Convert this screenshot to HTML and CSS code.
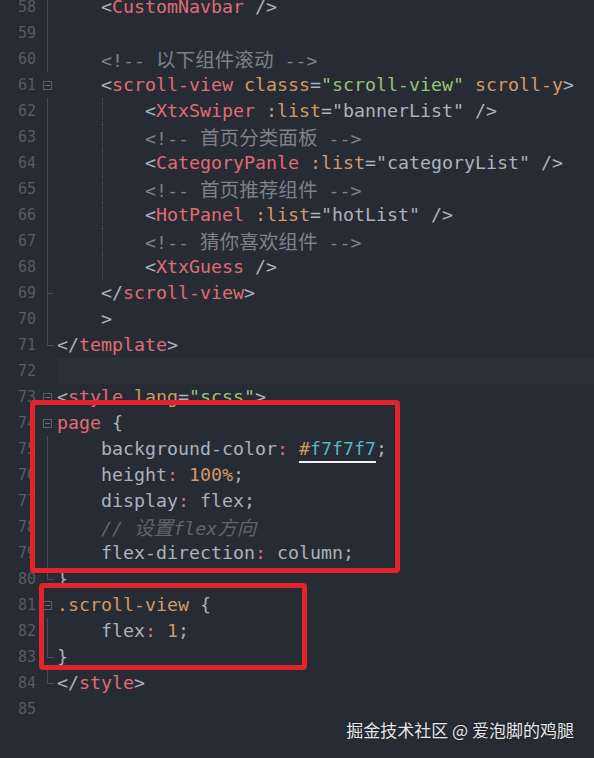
FILE: index.html
```html
<!DOCTYPE html>
<html lang="zh">
<head>
<meta charset="utf-8">
<title>code</title>
<link rel="stylesheet" href="styles.css">
</head>
<body>
<div class="editor">
  <div class="lines">
    <div class="row"><span class="ln">58</span><span class="fold f-line"></span><span class="code">    <span class="p">&lt;</span><span class="t">CustomNavbar</span> <span class="p">/&gt;</span></span></div>
    <div class="row"><span class="ln">59</span><span class="fold f-line"></span><span class="code"></span></div>
    <div class="row"><span class="ln">60</span><span class="fold f-line"></span><span class="code">    <span class="c">&lt;!-- <span class="cjk">以下组件滚动</span> --&gt;</span></span></div>
    <div class="row"><span class="ln">61</span><span class="fold f-box"></span><span class="code">    <span class="p">&lt;</span><span class="t">scroll-view</span> <span class="a">classs</span><span class="p">=</span><span class="s">"scroll-view"</span> <span class="a">scroll-y</span><span class="p">&gt;</span></span></div>
    <div class="row"><span class="ln">62</span><span class="fold f-line"></span><span class="code g">        <span class="p">&lt;</span><span class="t">XtxSwiper</span> <span class="a">:list</span><span class="p">="bannerList"</span> <span class="p">/&gt;</span></span></div>
    <div class="row"><span class="ln">63</span><span class="fold f-line"></span><span class="code g">        <span class="c">&lt;!-- <span class="cjk">首页分类面板</span> --&gt;</span></span></div>
    <div class="row"><span class="ln">64</span><span class="fold f-line"></span><span class="code g">        <span class="p">&lt;</span><span class="t">CategoryPanle</span> <span class="a">:list</span><span class="p">="categoryList"</span> <span class="p">/&gt;</span></span></div>
    <div class="row"><span class="ln">65</span><span class="fold f-line"></span><span class="code g">        <span class="c">&lt;!-- <span class="cjk">首页推荐组件</span> --&gt;</span></span></div>
    <div class="row"><span class="ln">66</span><span class="fold f-line"></span><span class="code g">        <span class="p">&lt;</span><span class="t">HotPanel</span> <span class="a">:list</span><span class="p">="hotList"</span> <span class="p">/&gt;</span></span></div>
    <div class="row"><span class="ln">67</span><span class="fold f-line"></span><span class="code g">        <span class="c">&lt;!-- <span class="cjk">猜你喜欢组件</span> --&gt;</span></span></div>
    <div class="row"><span class="ln">68</span><span class="fold f-line"></span><span class="code g">        <span class="p">&lt;</span><span class="t">XtxGuess</span> <span class="p">/&gt;</span></span></div>
    <div class="row"><span class="ln">69</span><span class="fold f-tick"></span><span class="code">    <span class="p">&lt;/</span><span class="t">scroll-view</span><span class="p">&gt;</span></span></div>
    <div class="row"><span class="ln">70</span><span class="fold f-line"></span><span class="code">    <span class="p">&gt;</span></span></div>
    <div class="row"><span class="ln">71</span><span class="fold f-end"></span><span class="code"><span class="p">&lt;/</span><span class="t">template</span><span class="p">&gt;</span></span></div>
    <div class="row"><span class="ln">72</span><span class="fold"></span><span class="code cur"></span></div>
    <div class="row"><span class="ln">73</span><span class="fold f-box"></span><span class="code"><span class="p">&lt;</span><span class="t">style</span> <span class="a">lang</span><span class="p">=</span><span class="s">"scss"</span><span class="p">&gt;</span></span></div>
    <div class="row"><span class="ln">74</span><span class="fold f-box"></span><span class="code"><span class="t">page</span> <span class="p">{</span></span></div>
    <div class="row"><span class="ln">75</span><span class="fold f-line"></span><span class="code">    <span class="p">background-color</span><span class="t">:</span> <span class="u"><span class="a">#</span><span class="h">f7f7f7</span></span><span class="p">;</span></span></div>
    <div class="row"><span class="ln">76</span><span class="fold f-line"></span><span class="code">    <span class="p">height</span><span class="t">:</span> <span class="a">100%</span><span class="p">;</span></span></div>
    <div class="row"><span class="ln">77</span><span class="fold f-line"></span><span class="code">    <span class="p">display</span><span class="t">:</span> <span class="p">flex;</span></span></div>
    <div class="row"><span class="ln">78</span><span class="fold f-line"></span><span class="code">    <span class="ci">// <span class="cjk">设置</span>flex<span class="cjk">方向</span></span></span></div>
    <div class="row"><span class="ln">79</span><span class="fold f-line"></span><span class="code">    <span class="p">flex-direction</span><span class="t">:</span> <span class="p">column;</span></span></div>
    <div class="row"><span class="ln">80</span><span class="fold f-end"></span><span class="code"><span class="p">}</span></span></div>
    <div class="row"><span class="ln">81</span><span class="fold f-box"></span><span class="code"><span class="a">.scroll-view</span> <span class="p">{</span></span></div>
    <div class="row"><span class="ln">82</span><span class="fold f-line"></span><span class="code">    <span class="p">flex</span><span class="t">:</span> <span class="a">1</span><span class="p">;</span></span></div>
    <div class="row"><span class="ln">83</span><span class="fold f-end"></span><span class="code"><span class="p">}</span></span></div>
    <div class="row"><span class="ln">84</span><span class="fold f-end"></span><span class="code"><span class="p">&lt;/</span><span class="t">style</span><span class="p">&gt;</span></span></div>
    <div class="row"><span class="ln">85</span><span class="fold"></span><span class="code"></span></div>
  </div>
  <div class="mark box1"></div>
  <div class="mark box2"></div>
  <div class="watermark">掘金技术社区 @ 爱泡脚的鸡腿</div>
</div>
</body>
</html>
```
FILE: styles.css
```css
html, body {
  margin: 0;
  padding: 0;
  background: #272b33;
  height: 100%;
  overflow: hidden;
}
.editor {
  position: relative;
  width: 594px;
  height: 758px;
  overflow: hidden;
  background: #272b33;
}
.lines {
  display: flex;
  flex-direction: column;
  margin-top: -6px;
}
.row {
  display: flex;
  height: 26px;
  line-height: 26px;
  font-family: "DejaVu Sans Mono", "Liberation Mono", monospace;
  font-size: 18.27px;
  color: #abb2bf;
}
.ln {
  width: 36px;
  flex: none;
  text-align: right;
  font-size: 15px;
  color: #565c68;
}
.fold {
  width: 21px;
  flex: none;
  position: relative;
}
.f-line::before,
.f-tick::before {
  content: "";
  position: absolute;
  left: 11px;
  top: 0;
  bottom: 0;
  width: 1px;
  background: #474c57;
}
.f-tick::after {
  content: "";
  position: absolute;
  left: 11px;
  top: 13px;
  width: 6px;
  height: 1px;
  background: #474c57;
}
.f-end::before {
  content: "";
  position: absolute;
  left: 11px;
  top: 0;
  height: 14px;
  width: 1px;
  background: #474c57;
}
.f-end::after {
  content: "";
  position: absolute;
  left: 11px;
  top: 13px;
  width: 7px;
  height: 1px;
  background: #474c57;
}
.f-box::before {
  content: "";
  position: absolute;
  left: 7px;
  top: 9px;
  width: 7px;
  height: 7px;
  border: 1px solid #5a606b;
  background: #272b33;
}
.f-box::after {
  content: "";
  position: absolute;
  left: 9px;
  top: 13px;
  width: 5px;
  height: 1px;
  background: #6a707b;
}
.code {
  flex: 1;
  white-space: pre;
  position: relative;
}
.code.g::before {
  content: "";
  position: absolute;
  left: 45px;
  top: 0;
  bottom: 0;
  border-left: 1px dotted #4d535e;
}
.code.cur {
  background: #2c3039;
}
.p { color: #abb2bf; }
.t { color: #e06c75; }
.a { color: #d19a66; }
.s { color: #98c379; }
.h { color: #56b6c2; }
.c { color: #7d828c; }
.ci { color: #5f6570; font-style: italic; }
.cjk {
  font-family: "Noto Sans CJK SC", sans-serif;
  font-size: 19.6px;
  font-style: normal;
}
.ci .cjk { font-style: italic; }
.u {
  text-decoration: underline;
  text-decoration-color: #f2f2f2;
  text-decoration-thickness: 2px;
  text-underline-offset: 6px;
}
.mark {
  position: absolute;
  border: 5px solid #e3242b;
  border-radius: 4px;
  box-sizing: border-box;
}
.box1 {
  left: 30px;
  top: 400px;
  width: 370px;
  height: 173px;
}
.box2 {
  left: 39px;
  top: 583px;
  width: 268px;
  height: 87px;
}
.watermark {
  position: absolute;
  right: 20px;
  top: 718px;
  font-family: "Noto Sans CJK SC", sans-serif;
  font-size: 17px;
  line-height: 24px;
  color: #e6e6e6;
  text-shadow: 0 0 2px rgba(0,0,0,0.5);
}
```
